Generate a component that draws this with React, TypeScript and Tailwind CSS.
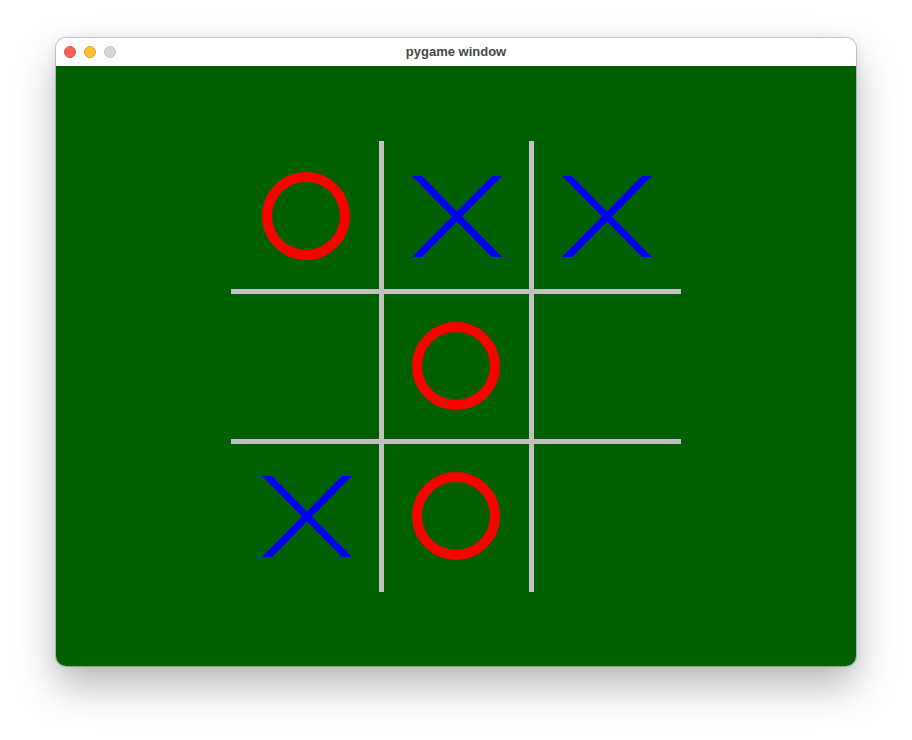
type Mark = "X" | "O" | null;

const BOARD: Mark[][] = [
  ["O", "X", "X"],
  [null, "O", null],
  ["X", "O", null],
];

const CELL = 150;

function Board() {
  return (
    <svg width={450} height={451} viewBox="0 0 450 451" className="block">
      {/* grid lines */}
      <rect x={148} y={0} width={5} height={451} fill="#c0c0c0" />
      <rect x={298} y={0} width={5} height={451} fill="#c0c0c0" />
      <rect x={0} y={148} width={450} height={5} fill="#c0c0c0" />
      <rect x={0} y={298} width={450} height={5} fill="#c0c0c0" />

      {BOARD.map((row, r) =>
        row.map((mark, c) => {
          const cx = c * CELL + 75;
          const cy = r * CELL + 75;
          if (mark === "O") {
            return (
              <circle
                key={`${r}-${c}`}
                cx={cx}
                cy={cy}
                r={39}
                fill="none"
                stroke="#ff0000"
                strokeWidth={10}
              />
            );
          }
          if (mark === "X") {
            return (
              <g key={`${r}-${c}`} fill="#0000ff">
                <polygon
                  points={`${cx - 44},${cy - 40} ${cx - 34},${cy - 40} ${cx + 46},${cy + 41} ${cx + 36},${cy + 41}`}
                />
                <polygon
                  points={`${cx + 36},${cy - 40} ${cx + 46},${cy - 40} ${cx - 34},${cy + 41} ${cx - 44},${cy + 41}`}
                />
              </g>
            );
          }
          return null;
        })
      )}
    </svg>
  );
}

export default function App() {
  return (
    <div className="min-h-[740px] w-[912px] bg-white pt-[38px]">
      <div className="mx-auto w-[800px] overflow-hidden rounded-[10px] shadow-[0_0_0_1px_rgba(0,0,0,0.18),0_20px_40px_rgba(0,0,0,0.28),0_0_12px_rgba(0,0,0,0.08)]">
        {/* title bar */}
        <div className="relative flex h-[28px] items-center justify-center bg-white">
          <div className="absolute left-[8px] top-[8px] flex gap-[8px]">
            <span className="h-[12px] w-[12px] rounded-full border border-[#e24b41] bg-[#ff5f57]" />
            <span className="h-[12px] w-[12px] rounded-full border border-[#e1a123] bg-[#febc2e]" />
            <span className="h-[12px] w-[12px] rounded-full border border-[#c4c4c4] bg-[#d6d6d6]" />
          </div>
          <span className="font-['Liberation_Sans',Arial,sans-serif] text-[13px] font-bold text-[#474747]">
            pygame window
          </span>
        </div>
        {/* game surface */}
        <div className="flex h-[600px] items-start justify-center bg-[#005f00] pt-[75px]">
          <Board />
        </div>
      </div>
    </div>
  );
}
